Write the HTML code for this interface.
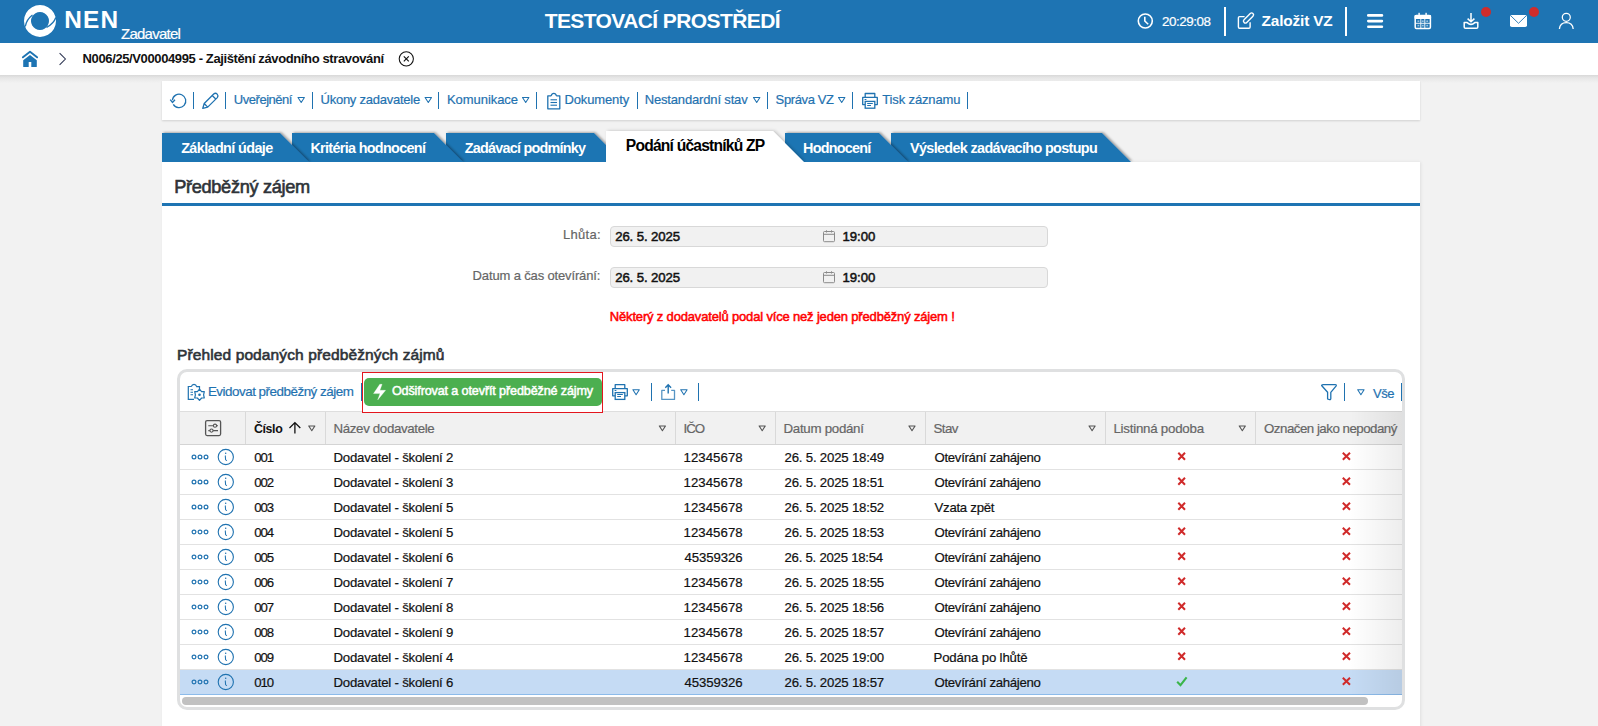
<!DOCTYPE html>
<html lang="cs"><head><meta charset="utf-8"><title>NEN - Předběžný zájem</title>
<style>
html,body{margin:0;padding:0}
body{width:1598px;height:726px;overflow:hidden;position:relative;background:#f2f2f2;font-family:"Liberation Sans",sans-serif}
.a{position:absolute;box-sizing:border-box}
.t{position:absolute;white-space:pre;transform-origin:0 0}
</style></head><body>
<!-- header -->
<div class="a" style="left:0;top:0;width:1598px;height:43px;background:#1e74b3"></div>
<div class="a" style="left:1223.5px;top:7px;width:2px;height:29px;background:#fff"></div>
<div class="a" style="left:1345px;top:7px;width:2px;height:29px;background:#fff"></div>
<!-- breadcrumb -->
<div class="a" style="left:0;top:75px;width:1598px;height:8px;background:linear-gradient(#d8d8d8,#e6e6e6 35%,#f2f2f2)"></div>
<div class="a" style="left:0;top:43px;width:1598px;height:32px;background:#fff"></div>
<!-- toolbar card -->
<div class="a" style="left:162px;top:81px;width:1258px;height:39px;background:#fff;box-shadow:0 1px 2px rgba(0,0,0,.14)"></div>
<!-- main card -->
<div class="a" style="left:162px;top:162px;width:1258px;height:600px;background:#fff;box-shadow:1px 0 3px rgba(0,0,0,.08)"></div>
<!-- tabs -->
<svg class="a" style="left:0;top:0" width="1598" height="162" viewBox="0 0 1598 162">
<defs>
<filter id="ts" x="-10%" y="-30%" width="120%" height="160%"><feDropShadow dx="1.5" dy="-0.7" stdDeviation="1.1" flood-color="#000" flood-opacity="0.35"/></filter>
<filter id="ta" x="-10%" y="-30%" width="120%" height="160%"><feDropShadow dx="1.6" dy="-0.3" stdDeviation="1.4" flood-color="#000" flood-opacity="0.2"/></filter>
</defs>
<polygon filter="url(#ts)" points="891,133 1102,133 1131,162 891,162" fill="#1e74b3"/>
<polygon filter="url(#ts)" points="785,133 879,133 908,162 785,162" fill="#1e74b3"/>
<polygon filter="url(#ts)" points="446,133 594,133 623,162 446,162" fill="#1e74b3"/>
<polygon filter="url(#ts)" points="292,133 434,133 463,162 292,162" fill="#1e74b3"/>
<polygon filter="url(#ts)" points="162,133 280,133 309,162 162,162" fill="#1e74b3"/>
<polygon filter="url(#ta)" points="606,131 773,131 804,162 606,162" fill="#fff"/>
</svg>
<!-- heading underline -->
<div class="a" style="left:162px;top:203px;width:1258px;height:3px;background:#1e74b3"></div>
<!-- inputs -->
<div class="a" style="left:610px;top:226px;width:438px;height:20.5px;background:#f1f1f1;border:1px solid #d8d8d8;border-radius:4px"></div>
<div class="a" style="left:610px;top:267px;width:438px;height:20.5px;background:#f1f1f1;border:1px solid #d8d8d8;border-radius:4px"></div>
<!-- grid container -->
<div class="a" style="left:177px;top:369px;width:1228px;height:341px;border:3px solid #dfe0e1;border-radius:10px;background:#fff"></div>
<!-- table header -->
<div class="a" style="left:180px;top:411px;width:1222px;height:34px;background:#f1f1f1;border-top:1px solid #dedede;border-bottom:1px solid #d4d4d4"></div>
<div class="a" style="left:245px;top:412px;width:1px;height:32px;background:#d9d9d9"></div>
<div class="a" style="left:325px;top:412px;width:1px;height:32px;background:#d9d9d9"></div>
<div class="a" style="left:675px;top:412px;width:1px;height:32px;background:#d9d9d9"></div>
<div class="a" style="left:775px;top:412px;width:1px;height:32px;background:#d9d9d9"></div>
<div class="a" style="left:925px;top:412px;width:1px;height:32px;background:#d9d9d9"></div>
<div class="a" style="left:1105px;top:412px;width:1px;height:32px;background:#d9d9d9"></div>
<div class="a" style="left:1255px;top:412px;width:1px;height:32px;background:#d9d9d9"></div>
<!-- rows -->
<div class="a" style="left:180px;top:445px;width:1222px;height:25px;border-bottom:1px solid #e2e2e2"></div>
<div class="a" style="left:180px;top:470px;width:1222px;height:25px;border-bottom:1px solid #e2e2e2"></div>
<div class="a" style="left:180px;top:495px;width:1222px;height:25px;border-bottom:1px solid #e2e2e2"></div>
<div class="a" style="left:180px;top:520px;width:1222px;height:25px;border-bottom:1px solid #e2e2e2"></div>
<div class="a" style="left:180px;top:545px;width:1222px;height:25px;border-bottom:1px solid #e2e2e2"></div>
<div class="a" style="left:180px;top:570px;width:1222px;height:25px;border-bottom:1px solid #e2e2e2"></div>
<div class="a" style="left:180px;top:595px;width:1222px;height:25px;border-bottom:1px solid #e2e2e2"></div>
<div class="a" style="left:180px;top:620px;width:1222px;height:25px;border-bottom:1px solid #e2e2e2"></div>
<div class="a" style="left:180px;top:645px;width:1222px;height:25px;border-bottom:1px solid #e2e2e2"></div>
<div class="a" style="left:180px;top:670px;width:1222px;height:25px;background:#c5dbf4;border-bottom:1px solid #8cbbea"></div>
<!-- right scroll shade -->
<div class="a" style="left:1350px;top:411px;width:52px;height:284px;background:linear-gradient(to right,rgba(0,0,0,0),rgba(0,0,0,.07))"></div>
<!-- scrollbar -->
<div class="a" style="left:181.5px;top:697px;width:1186px;height:8px;border-radius:4px;background:#c1c1c1"></div>
<!-- red box + green button -->
<div class="a" style="left:362px;top:372px;width:241px;height:41px;border:1px solid #e3161e;background:#fff"></div>
<div class="a" style="left:364px;top:378px;width:238px;height:28px;border-radius:5px;background:#4caf50"></div>
<!-- grid toolbar separators -->
<div class="a" style="left:361px;top:383px;width:1px;height:18px;background:#1f72b0"></div>
<div class="a" style="left:651px;top:383px;width:1px;height:18px;background:#1f72b0"></div>
<div class="a" style="left:698px;top:383px;width:1px;height:18px;background:#1f72b0"></div>
<div class="a" style="left:1344px;top:383px;width:1px;height:18px;background:#1f72b0"></div>
<div class="a" style="left:1401px;top:383px;width:1px;height:18px;background:#1f72b0"></div>
<!-- toolbar separators -->
<div class="a" style="left:193px;top:92px;width:1px;height:17px;background:#1f72b0"></div>
<div class="a" style="left:225px;top:92px;width:1px;height:17px;background:#1f72b0"></div>
<div class="a" style="left:312px;top:92px;width:1px;height:17px;background:#1f72b0"></div>
<div class="a" style="left:438px;top:92px;width:1px;height:17px;background:#1f72b0"></div>
<div class="a" style="left:536px;top:92px;width:1px;height:17px;background:#1f72b0"></div>
<div class="a" style="left:637px;top:92px;width:1px;height:17px;background:#1f72b0"></div>
<div class="a" style="left:767px;top:92px;width:1px;height:17px;background:#1f72b0"></div>
<div class="a" style="left:852px;top:92px;width:1px;height:17px;background:#1f72b0"></div>
<div class="a" style="left:967px;top:92px;width:1px;height:17px;background:#1f72b0"></div>

<span class="t" style="left:64.15px;top:8.06px;font-size:24.4px;line-height:24.4px;font-weight:700;color:#fff;letter-spacing:1.250px;">NEN</span>
<span class="t" style="left:121.00px;top:26.25px;font-size:15px;line-height:15px;font-weight:400;color:#fff;letter-spacing:-0.750px;-webkit-text-stroke:0.2px #fff;">Zadavatel</span>
<span class="t" style="left:544.70px;top:10.45px;font-size:21px;line-height:21px;font-weight:700;color:#fff;letter-spacing:-0.594px;">TESTOVACÍ PROSTŘEDÍ</span>
<span class="t" style="left:1161.90px;top:14.61px;font-size:13.4px;line-height:13.4px;font-weight:400;color:#fff;letter-spacing:-0.429px;-webkit-text-stroke:0.2px #fff;">20:29:08</span>
<span class="t" style="left:1261.60px;top:12.81px;font-size:15.4px;line-height:15.4px;font-weight:700;color:#fff;letter-spacing:-0.178px;">Založit VZ</span>
<span class="t" style="left:82.60px;top:51.85px;font-size:13px;line-height:13px;font-weight:700;color:#111;letter-spacing:-0.380px;">N006/25/V00004995 - Zajištění závodního stravování</span>
<span class="t" style="left:233.80px;top:92.85px;font-size:13px;line-height:13px;font-weight:400;color:#1f72b0;letter-spacing:-0.467px;-webkit-text-stroke:0.2px #1f72b0;">Uveřejnění</span>
<span class="t" style="left:320.50px;top:92.85px;font-size:13px;line-height:13px;font-weight:400;color:#1f72b0;letter-spacing:-0.247px;-webkit-text-stroke:0.2px #1f72b0;">Úkony zadavatele</span>
<span class="t" style="left:447.00px;top:92.85px;font-size:13px;line-height:13px;font-weight:400;color:#1f72b0;letter-spacing:-0.056px;-webkit-text-stroke:0.2px #1f72b0;">Komunikace</span>
<span class="t" style="left:564.40px;top:92.85px;font-size:13px;line-height:13px;font-weight:400;color:#1f72b0;letter-spacing:-0.125px;-webkit-text-stroke:0.2px #1f72b0;">Dokumenty</span>
<span class="t" style="left:644.70px;top:92.85px;font-size:13px;line-height:13px;font-weight:400;color:#1f72b0;letter-spacing:-0.156px;-webkit-text-stroke:0.2px #1f72b0;">Nestandardní stav</span>
<span class="t" style="left:775.60px;top:92.85px;font-size:13px;line-height:13px;font-weight:400;color:#1f72b0;letter-spacing:-0.375px;-webkit-text-stroke:0.2px #1f72b0;">Správa VZ</span>
<span class="t" style="left:882.20px;top:92.85px;font-size:13px;line-height:13px;font-weight:400;color:#1f72b0;letter-spacing:-0.127px;-webkit-text-stroke:0.2px #1f72b0;">Tisk záznamu</span>
<span class="t" style="left:181.20px;top:140.66px;font-size:14.4px;line-height:14.4px;font-weight:700;color:#fff;letter-spacing:-0.615px;">Základní údaje</span>
<span class="t" style="left:310.40px;top:140.66px;font-size:14.4px;line-height:14.4px;font-weight:700;color:#fff;letter-spacing:-0.682px;">Kritéria hodnocení</span>
<span class="t" style="left:464.80px;top:140.66px;font-size:14.4px;line-height:14.4px;font-weight:700;color:#fff;letter-spacing:-0.769px;">Zadávací podmínky</span>
<span class="t" style="left:625.80px;top:137.64px;font-size:15.6px;line-height:15.6px;font-weight:700;color:#000;letter-spacing:-0.778px;">Podání účastníků ZP</span>
<span class="t" style="left:803.00px;top:140.66px;font-size:14.4px;line-height:14.4px;font-weight:700;color:#fff;letter-spacing:-0.750px;">Hodnocení</span>
<span class="t" style="left:910.00px;top:140.66px;font-size:14.4px;line-height:14.4px;font-weight:700;color:#fff;letter-spacing:-0.654px;">Výsledek zadávacího postupu</span>
<span class="t" style="left:174.20px;top:178.03px;font-size:18.2px;line-height:18.2px;font-weight:400;color:#2e3338;letter-spacing:-0.321px;-webkit-text-stroke:0.6px #2e3338;">Předběžný zájem</span>
<span class="t" style="left:563.10px;top:227.95px;font-size:13px;line-height:13px;font-weight:400;color:#666;letter-spacing:0.280px;-webkit-text-stroke:0.2px #666;">Lhůta:</span>
<span class="t" style="left:472.60px;top:268.95px;font-size:13px;line-height:13px;font-weight:400;color:#666;letter-spacing:-0.143px;-webkit-text-stroke:0.2px #666;">Datum a čas otevírání:</span>
<span class="t" style="left:615.20px;top:229.68px;font-size:13.2px;line-height:13.2px;font-weight:400;color:#111;letter-spacing:-0.120px;-webkit-text-stroke:0.5px #111;">26. 5. 2025</span>
<span class="t" style="left:842.60px;top:229.68px;font-size:13.2px;line-height:13.2px;font-weight:400;color:#111;letter-spacing:-0.075px;-webkit-text-stroke:0.5px #111;">19:00</span>
<span class="t" style="left:615.20px;top:270.68px;font-size:13.2px;line-height:13.2px;font-weight:400;color:#111;letter-spacing:-0.120px;-webkit-text-stroke:0.5px #111;">26. 5. 2025</span>
<span class="t" style="left:842.60px;top:270.68px;font-size:13.2px;line-height:13.2px;font-weight:400;color:#111;letter-spacing:-0.075px;-webkit-text-stroke:0.5px #111;">19:00</span>
<span class="t" style="left:609.80px;top:309.85px;font-size:13px;line-height:13px;font-weight:400;color:#ff0000;letter-spacing:-0.169px;-webkit-text-stroke:0.5px #ff0000;">Některý z dodavatelů podal více než jeden předběžný zájem !</span>
<span class="t" style="left:177.00px;top:346.62px;font-size:15.5px;line-height:15.5px;font-weight:400;color:#2e3338;letter-spacing:0.115px;-webkit-text-stroke:0.6px #2e3338;">Přehled podaných předběžných zájmů</span>
<span class="t" style="left:207.90px;top:384.61px;font-size:13.4px;line-height:13.4px;font-weight:400;color:#1f72b0;letter-spacing:-0.483px;-webkit-text-stroke:0.2px #1f72b0;">Evidovat předběžný zájem</span>
<span class="t" style="left:391.90px;top:385.49px;font-size:12.6px;line-height:12.6px;font-weight:400;color:#fff;letter-spacing:-0.129px;-webkit-text-stroke:0.5px #fff;">Odšifrovat a otevřít předběžné zájmy</span>
<span class="t" style="left:1373.10px;top:386.75px;font-size:13px;line-height:13px;font-weight:400;color:#1f72b0;letter-spacing:-0.450px;-webkit-text-stroke:0.2px #1f72b0;">Vše</span>
<span class="t" style="left:253.90px;top:423.16px;font-size:12.4px;line-height:12.4px;font-weight:700;color:#111;letter-spacing:-0.350px;">Číslo</span>
<span class="t" style="left:333.50px;top:421.69px;font-size:13.3px;line-height:13.3px;font-weight:400;color:#666;letter-spacing:-0.347px;-webkit-text-stroke:0.2px #666;">Název dodavatele</span>
<span class="t" style="left:683.50px;top:421.69px;font-size:13.3px;line-height:13.3px;font-weight:400;color:#666;letter-spacing:-1.050px;-webkit-text-stroke:0.2px #666;">IČO</span>
<span class="t" style="left:783.50px;top:421.69px;font-size:13.3px;line-height:13.3px;font-weight:400;color:#666;letter-spacing:-0.282px;-webkit-text-stroke:0.2px #666;">Datum podání</span>
<span class="t" style="left:933.50px;top:421.69px;font-size:13.3px;line-height:13.3px;font-weight:400;color:#666;letter-spacing:-0.567px;-webkit-text-stroke:0.2px #666;">Stav</span>
<span class="t" style="left:1113.40px;top:421.69px;font-size:13.3px;line-height:13.3px;font-weight:400;color:#666;letter-spacing:-0.229px;-webkit-text-stroke:0.2px #666;">Listinná podoba</span>
<span class="t" style="left:1264.00px;top:421.69px;font-size:13.3px;line-height:13.3px;font-weight:400;color:#666;letter-spacing:-0.500px;-webkit-text-stroke:0.2px #666;">Označen jako nepodaný</span>
<span class="t" style="left:254.20px;top:450.78px;font-size:13.2px;line-height:13.2px;font-weight:400;color:#111;letter-spacing:-1.000px;-webkit-text-stroke:0.2px #111;">001</span>
<span class="t" style="left:333.50px;top:450.78px;font-size:13.2px;line-height:13.2px;font-weight:400;color:#111;letter-spacing:-0.205px;-webkit-text-stroke:0.2px #111;">Dodavatel - školení 2</span>
<span class="t" style="left:683.50px;top:450.78px;font-size:13.2px;line-height:13.2px;font-weight:400;color:#111;letter-spacing:0.071px;-webkit-text-stroke:0.2px #111;">12345678</span>
<span class="t" style="left:784.50px;top:450.78px;font-size:13.2px;line-height:13.2px;font-weight:400;color:#111;letter-spacing:-0.188px;-webkit-text-stroke:0.2px #111;">26. 5. 2025 18:49</span>
<span class="t" style="left:934.50px;top:450.78px;font-size:13.2px;line-height:13.2px;font-weight:400;color:#111;letter-spacing:-0.300px;-webkit-text-stroke:0.2px #111;">Otevírání zahájeno</span>
<span class="t" style="left:254.20px;top:475.78px;font-size:13.2px;line-height:13.2px;font-weight:400;color:#111;letter-spacing:-1.000px;-webkit-text-stroke:0.2px #111;">002</span>
<span class="t" style="left:333.50px;top:475.78px;font-size:13.2px;line-height:13.2px;font-weight:400;color:#111;letter-spacing:-0.205px;-webkit-text-stroke:0.2px #111;">Dodavatel - školení 3</span>
<span class="t" style="left:683.50px;top:475.78px;font-size:13.2px;line-height:13.2px;font-weight:400;color:#111;letter-spacing:0.071px;-webkit-text-stroke:0.2px #111;">12345678</span>
<span class="t" style="left:784.50px;top:475.78px;font-size:13.2px;line-height:13.2px;font-weight:400;color:#111;letter-spacing:-0.188px;-webkit-text-stroke:0.2px #111;">26. 5. 2025 18:51</span>
<span class="t" style="left:934.50px;top:475.78px;font-size:13.2px;line-height:13.2px;font-weight:400;color:#111;letter-spacing:-0.300px;-webkit-text-stroke:0.2px #111;">Otevírání zahájeno</span>
<span class="t" style="left:254.20px;top:500.78px;font-size:13.2px;line-height:13.2px;font-weight:400;color:#111;letter-spacing:-1.000px;-webkit-text-stroke:0.2px #111;">003</span>
<span class="t" style="left:333.50px;top:500.78px;font-size:13.2px;line-height:13.2px;font-weight:400;color:#111;letter-spacing:-0.205px;-webkit-text-stroke:0.2px #111;">Dodavatel - školení 5</span>
<span class="t" style="left:683.50px;top:500.78px;font-size:13.2px;line-height:13.2px;font-weight:400;color:#111;letter-spacing:0.071px;-webkit-text-stroke:0.2px #111;">12345678</span>
<span class="t" style="left:784.50px;top:500.78px;font-size:13.2px;line-height:13.2px;font-weight:400;color:#111;letter-spacing:-0.188px;-webkit-text-stroke:0.2px #111;">26. 5. 2025 18:52</span>
<span class="t" style="left:934.50px;top:500.78px;font-size:13.2px;line-height:13.2px;font-weight:400;color:#111;letter-spacing:-0.256px;-webkit-text-stroke:0.2px #111;">Vzata zpět</span>
<span class="t" style="left:254.20px;top:525.78px;font-size:13.2px;line-height:13.2px;font-weight:400;color:#111;letter-spacing:-1.000px;-webkit-text-stroke:0.2px #111;">004</span>
<span class="t" style="left:333.50px;top:525.78px;font-size:13.2px;line-height:13.2px;font-weight:400;color:#111;letter-spacing:-0.205px;-webkit-text-stroke:0.2px #111;">Dodavatel - školení 5</span>
<span class="t" style="left:683.50px;top:525.78px;font-size:13.2px;line-height:13.2px;font-weight:400;color:#111;letter-spacing:0.071px;-webkit-text-stroke:0.2px #111;">12345678</span>
<span class="t" style="left:784.50px;top:525.78px;font-size:13.2px;line-height:13.2px;font-weight:400;color:#111;letter-spacing:-0.188px;-webkit-text-stroke:0.2px #111;">26. 5. 2025 18:53</span>
<span class="t" style="left:934.50px;top:525.78px;font-size:13.2px;line-height:13.2px;font-weight:400;color:#111;letter-spacing:-0.300px;-webkit-text-stroke:0.2px #111;">Otevírání zahájeno</span>
<span class="t" style="left:254.20px;top:550.78px;font-size:13.2px;line-height:13.2px;font-weight:400;color:#111;letter-spacing:-1.000px;-webkit-text-stroke:0.2px #111;">005</span>
<span class="t" style="left:333.50px;top:550.78px;font-size:13.2px;line-height:13.2px;font-weight:400;color:#111;letter-spacing:-0.205px;-webkit-text-stroke:0.2px #111;">Dodavatel - školení 6</span>
<span class="t" style="left:684.50px;top:550.78px;font-size:13.2px;line-height:13.2px;font-weight:400;color:#111;letter-spacing:-0.071px;-webkit-text-stroke:0.2px #111;">45359326</span>
<span class="t" style="left:784.50px;top:550.78px;font-size:13.2px;line-height:13.2px;font-weight:400;color:#111;letter-spacing:-0.250px;-webkit-text-stroke:0.2px #111;">26. 5. 2025 18:54</span>
<span class="t" style="left:934.50px;top:550.78px;font-size:13.2px;line-height:13.2px;font-weight:400;color:#111;letter-spacing:-0.300px;-webkit-text-stroke:0.2px #111;">Otevírání zahájeno</span>
<span class="t" style="left:254.20px;top:575.78px;font-size:13.2px;line-height:13.2px;font-weight:400;color:#111;letter-spacing:-1.000px;-webkit-text-stroke:0.2px #111;">006</span>
<span class="t" style="left:333.50px;top:575.78px;font-size:13.2px;line-height:13.2px;font-weight:400;color:#111;letter-spacing:-0.205px;-webkit-text-stroke:0.2px #111;">Dodavatel - školení 7</span>
<span class="t" style="left:683.50px;top:575.78px;font-size:13.2px;line-height:13.2px;font-weight:400;color:#111;letter-spacing:0.071px;-webkit-text-stroke:0.2px #111;">12345678</span>
<span class="t" style="left:784.50px;top:575.78px;font-size:13.2px;line-height:13.2px;font-weight:400;color:#111;letter-spacing:-0.188px;-webkit-text-stroke:0.2px #111;">26. 5. 2025 18:55</span>
<span class="t" style="left:934.50px;top:575.78px;font-size:13.2px;line-height:13.2px;font-weight:400;color:#111;letter-spacing:-0.300px;-webkit-text-stroke:0.2px #111;">Otevírání zahájeno</span>
<span class="t" style="left:254.20px;top:600.78px;font-size:13.2px;line-height:13.2px;font-weight:400;color:#111;letter-spacing:-1.000px;-webkit-text-stroke:0.2px #111;">007</span>
<span class="t" style="left:333.50px;top:600.78px;font-size:13.2px;line-height:13.2px;font-weight:400;color:#111;letter-spacing:-0.205px;-webkit-text-stroke:0.2px #111;">Dodavatel - školení 8</span>
<span class="t" style="left:683.50px;top:600.78px;font-size:13.2px;line-height:13.2px;font-weight:400;color:#111;letter-spacing:0.071px;-webkit-text-stroke:0.2px #111;">12345678</span>
<span class="t" style="left:784.50px;top:600.78px;font-size:13.2px;line-height:13.2px;font-weight:400;color:#111;letter-spacing:-0.188px;-webkit-text-stroke:0.2px #111;">26. 5. 2025 18:56</span>
<span class="t" style="left:934.50px;top:600.78px;font-size:13.2px;line-height:13.2px;font-weight:400;color:#111;letter-spacing:-0.300px;-webkit-text-stroke:0.2px #111;">Otevírání zahájeno</span>
<span class="t" style="left:254.20px;top:625.78px;font-size:13.2px;line-height:13.2px;font-weight:400;color:#111;letter-spacing:-1.000px;-webkit-text-stroke:0.2px #111;">008</span>
<span class="t" style="left:333.50px;top:625.78px;font-size:13.2px;line-height:13.2px;font-weight:400;color:#111;letter-spacing:-0.205px;-webkit-text-stroke:0.2px #111;">Dodavatel - školení 9</span>
<span class="t" style="left:683.50px;top:625.78px;font-size:13.2px;line-height:13.2px;font-weight:400;color:#111;letter-spacing:0.071px;-webkit-text-stroke:0.2px #111;">12345678</span>
<span class="t" style="left:784.50px;top:625.78px;font-size:13.2px;line-height:13.2px;font-weight:400;color:#111;letter-spacing:-0.188px;-webkit-text-stroke:0.2px #111;">26. 5. 2025 18:57</span>
<span class="t" style="left:934.50px;top:625.78px;font-size:13.2px;line-height:13.2px;font-weight:400;color:#111;letter-spacing:-0.300px;-webkit-text-stroke:0.2px #111;">Otevírání zahájeno</span>
<span class="t" style="left:254.20px;top:650.78px;font-size:13.2px;line-height:13.2px;font-weight:400;color:#111;letter-spacing:-1.000px;-webkit-text-stroke:0.2px #111;">009</span>
<span class="t" style="left:333.50px;top:650.78px;font-size:13.2px;line-height:13.2px;font-weight:400;color:#111;letter-spacing:-0.205px;-webkit-text-stroke:0.2px #111;">Dodavatel - školení 4</span>
<span class="t" style="left:683.50px;top:650.78px;font-size:13.2px;line-height:13.2px;font-weight:400;color:#111;letter-spacing:0.071px;-webkit-text-stroke:0.2px #111;">12345678</span>
<span class="t" style="left:784.50px;top:650.78px;font-size:13.2px;line-height:13.2px;font-weight:400;color:#111;letter-spacing:-0.188px;-webkit-text-stroke:0.2px #111;">26. 5. 2025 19:00</span>
<span class="t" style="left:933.50px;top:650.78px;font-size:13.2px;line-height:13.2px;font-weight:400;color:#111;letter-spacing:-0.136px;-webkit-text-stroke:0.2px #111;">Podána po lhůtě</span>
<span class="t" style="left:254.20px;top:675.78px;font-size:13.2px;line-height:13.2px;font-weight:400;color:#111;letter-spacing:-1.000px;-webkit-text-stroke:0.2px #111;">010</span>
<span class="t" style="left:333.50px;top:675.78px;font-size:13.2px;line-height:13.2px;font-weight:400;color:#111;letter-spacing:-0.205px;-webkit-text-stroke:0.2px #111;">Dodavatel - školení 6</span>
<span class="t" style="left:684.50px;top:675.78px;font-size:13.2px;line-height:13.2px;font-weight:400;color:#111;letter-spacing:-0.071px;-webkit-text-stroke:0.2px #111;">45359326</span>
<span class="t" style="left:784.50px;top:675.78px;font-size:13.2px;line-height:13.2px;font-weight:400;color:#111;letter-spacing:-0.188px;-webkit-text-stroke:0.2px #111;">26. 5. 2025 18:57</span>
<span class="t" style="left:934.50px;top:675.78px;font-size:13.2px;line-height:13.2px;font-weight:400;color:#111;letter-spacing:-0.300px;-webkit-text-stroke:0.2px #111;">Otevírání zahájeno</span>
<svg class="a" style="left:0;top:0" width="1598" height="726" viewBox="0 0 1598 726">
<path d="M40,5 a16,16 0 1,0 0.01,0 z M40,12 a9,9 0 1,1 -0.01,0 z" fill="#fff" fill-rule="evenodd"/>
<path d="M32.5,15 C28.5,18 26,22 25.3,26.5" stroke="#1e74b3" stroke-width="1.3" fill="none"/>
<path d="M46.5,27.5 C51,25 54.5,21.5 55.8,17.5" stroke="#1e74b3" stroke-width="1.3" fill="none"/>
<path d="M22.9,57.3 L30,51.7 L37.1,57.3" stroke="#1e74b3" stroke-width="1.9" fill="none" stroke-linecap="round" stroke-linejoin="round"/>
<path d="M23.2,60.3 L30,55 L36.8,60.3 V66.4 Q36.8,67 36.2,67 H31.3 V62 H28.7 V67 H23.8 Q23.2,67 23.2,66.4 Z" fill="#1e74b3"/>
<path d="M59.6,53.2 L65.4,59 L59.6,64.8" stroke="#2a3350" stroke-width="1.05" fill="none"/>
<circle cx="406.3" cy="58.8" r="7.1" stroke="#111" stroke-width="1.05" fill="none"/>
<path d="M403.8,56.3 L408.8,61.3 M408.8,56.3 L403.8,61.3" stroke="#111" stroke-width="1.15"/>
<circle cx="1145.3" cy="21" r="7" stroke="#fff" stroke-width="1.6" fill="none"/>
<path d="M1144.8,16.8 V21 L1148.2,24.3" stroke="#fff" stroke-width="1.6" fill="none"/>
<path d="M1244.6,16.6 H1239.6 Q1238.4,16.6 1238.4,17.8 V27.1 Q1238.4,28.3 1239.6,28.3 H1248.9 Q1250.1,28.3 1250.1,27.1 V22.3" stroke="#fff" stroke-width="1.4" fill="none"/>
<rect x="1242.2" y="16.1" width="12.6" height="3.8" rx="1.9" transform="rotate(-45 1248.5 18)" stroke="#fff" stroke-width="1.4" fill="none"/>
<rect x="1367" y="14" width="16.2" height="2.7" rx="1.3" fill="#fff"/>
<rect x="1367" y="19.7" width="16.2" height="2.7" rx="1.3" fill="#fff"/>
<rect x="1367" y="25.4" width="16.2" height="2.7" rx="1.3" fill="#fff"/>
<rect x="1415.2" y="15.6" width="15.2" height="12.8" rx="1.2" stroke="#fff" stroke-width="1.5" fill="none"/>
<rect x="1414.5" y="15" width="16.6" height="4" rx="1" fill="#fff"/>
<rect x="1418.4" y="12.8" width="1.4" height="3.4" fill="#fff"/><rect x="1425.4" y="12.8" width="1.4" height="3.4" fill="#fff"/>
<path d="M1420.8,19 V28 M1424.8,19 V28 M1415.5,23.3 H1430" stroke="#fff" stroke-width="1" opacity="0.9"/>
<rect x="1417.5" y="20.4" width="1.8" height="1.6" fill="#fff" opacity="0.55"/>
<rect x="1417.5" y="24.8" width="1.8" height="1.6" fill="#fff" opacity="0.55"/>
<rect x="1421.9" y="20.4" width="1.8" height="1.6" fill="#fff" opacity="0.55"/>
<rect x="1421.9" y="24.8" width="1.8" height="1.6" fill="#fff" opacity="0.55"/>
<rect x="1426.3" y="20.4" width="1.8" height="1.6" fill="#fff" opacity="0.55"/>
<rect x="1426.3" y="24.8" width="1.8" height="1.6" fill="#fff" opacity="0.55"/>
<path d="M1471,13 V21.8 M1467.6,18.6 L1471,21.8 L1474.4,18.6" stroke="#fff" stroke-width="1.5" fill="none"/>
<path d="M1464.2,22.6 H1467.2 Q1471,26.2 1474.8,22.6 H1477.8 V27 Q1477.8,28.3 1476.5,28.3 H1465.5 Q1464.2,28.3 1464.2,27 Z" stroke="#fff" stroke-width="1.5" fill="none" stroke-linejoin="round"/>
<circle cx="1486" cy="12" r="5" fill="#cf2c2c"/>
<rect x="1510" y="15" width="17" height="12" rx="1.8" fill="#fff"/>
<path d="M1510.6,15.6 L1518.5,23.3 L1526.4,15.6" stroke="#1e74b3" stroke-width="0.9" fill="none"/>
<circle cx="1534" cy="12" r="5" fill="#cf2c2c"/>
<circle cx="1566.3" cy="17.3" r="4" stroke="#fff" stroke-width="1.25" fill="none"/>
<path d="M1559.4,29 Q1560,22.6 1566.3,22.6 Q1572.6,22.6 1573.2,29" stroke="#fff" stroke-width="1.3" fill="none"/>
<path d="M173.3,104.3 A6.7,6.7 0 1,0 172.4,100.3" stroke="#1f72b0" stroke-width="1.3" fill="none"/>
<path d="M170.2,99.6 L172.5,102.4 L175,99.8" stroke="#1f72b0" stroke-width="1.3" fill="none"/>
<path d="M202.8,108.3 L204.2,103.5 L213.7,94 Q215.5,92.4 217.2,94.1 Q218.7,95.8 217.3,97.6 L207.7,107.1 Z M212.2,95.5 L216,99.2 M204.2,103.5 L207.7,107.1" stroke="#1f72b0" stroke-width="1.3" fill="none" stroke-linejoin="round"/>
<path d="M298.0,97.5 H304.4 L301.2,102.5 Z" stroke="#1f72b0" stroke-width="1.05" fill="none" stroke-linejoin="round"/>
<path d="M425.1,97.5 H431.5 L428.3,102.5 Z" stroke="#1f72b0" stroke-width="1.05" fill="none" stroke-linejoin="round"/>
<path d="M522.5,97.5 H528.9 L525.7,102.5 Z" stroke="#1f72b0" stroke-width="1.05" fill="none" stroke-linejoin="round"/>
<path d="M753.5,97.5 H759.9 L756.7,102.5 Z" stroke="#1f72b0" stroke-width="1.05" fill="none" stroke-linejoin="round"/>
<path d="M838.5,97.5 H844.9 L841.7,102.5 Z" stroke="#1f72b0" stroke-width="1.05" fill="none" stroke-linejoin="round"/>
<path d="M551.3,95.8 H547.8 V108.8 H559.8 V95.8 H556.3" stroke="#1f72b0" stroke-width="1.3" fill="none" stroke-linejoin="round"/>
<path d="M551.0999999999999,95.89999999999999 Q551.8,93.3 553.8,93.3 Q555.8,93.3 556.5,95.89999999999999" stroke="#1f72b0" stroke-width="1.3" fill="none"/>
<path d="M550.5,99.8 H557" stroke="#1f72b0" stroke-width="1.1"/>
<path d="M550.5,102.5 H557" stroke="#1f72b0" stroke-width="1.1"/>
<path d="M550.5,105.2 H557" stroke="#1f72b0" stroke-width="1.1"/>
<path d="M865.2,97.1 V93.5 H874.8 V97.1" stroke="#1f72b0" stroke-width="1.3" fill="none" stroke-linejoin="round"/>
<path d="M865.2,104.6 H862.7 V97.39999999999999 H877.3 V104.6 H874.8" stroke="#1f72b0" stroke-width="1.3" fill="none" stroke-linejoin="round"/>
<rect x="865.2" y="101.39999999999999" width="9.6" height="6.8" stroke="#1f72b0" stroke-width="1.3" fill="none"/>
<path d="M867.2,103.5 H872.8 M867.2,105.5 H871" stroke="#1f72b0" stroke-width="1"/>
<path d="M864.6,99.5 H866.4" stroke="#1f72b0" stroke-width="1"/>
<rect x="823.5" y="231.5" width="11" height="10.2" rx="1" stroke="#8a8a8a" stroke-width="1" fill="none"/>
<path d="M823.5,234.3 H834.5 M826.5,230.3 V232.5 M831.5,230.3 V232.5" stroke="#8a8a8a" stroke-width="1"/>
<rect x="823.5" y="272.5" width="11" height="10.2" rx="1" stroke="#8a8a8a" stroke-width="1" fill="none"/>
<path d="M823.5,275.3 H834.5 M826.5,271.3 V273.5 M831.5,271.3 V273.5" stroke="#8a8a8a" stroke-width="1"/>
<path d="M191.5,386.5 H188.3 V399.3 H194" stroke="#1f72b0" stroke-width="1.2" fill="none"/>
<path d="M191.3,386.6 Q192,384.3 194,384.3 Q196,384.3 196.7,386.6 H199.5 V389.5" stroke="#1f72b0" stroke-width="1.2" fill="none"/>
<path d="M190.5,389.8 H193 M190.5,392.3 H193 M190.5,394.8 H193" stroke="#1f72b0" stroke-width="1.1"/>
<path d="M199.5,389.2 L201.6,391.6 L204.3,391.6 L203.6,394.8 L204.3,398 L201.6,398 L199.5,400.4 L197.4,398 L194.7,398 L195.4,394.8 L194.7,391.6 L197.4,391.6 Z" stroke="#1f72b0" stroke-width="1.2" fill="none" stroke-linejoin="round"/>
<circle cx="199.5" cy="394.8" r="1.3" fill="#1f72b0"/>
<path d="M379.8,384.3 H382.1 L379.9,390.3 H385.6 L377.7,399.9 L380,393.6 H373.5 Z" fill="#fff" stroke="#fff" stroke-width="0.3" stroke-linejoin="round"/>
<path d="M615.2,388.3 V384.7 H624.8 V388.3" stroke="#1f72b0" stroke-width="1.3" fill="none" stroke-linejoin="round"/>
<path d="M615.2,395.8 H612.7 V388.6 H627.3 V395.8 H624.8" stroke="#1f72b0" stroke-width="1.3" fill="none" stroke-linejoin="round"/>
<rect x="615.2" y="392.6" width="9.6" height="6.8" stroke="#1f72b0" stroke-width="1.3" fill="none"/>
<path d="M617.2,394.5 H622.8 M617.2,396.5 H621" stroke="#1f72b0" stroke-width="1"/>
<path d="M614.6,390.5 H616.4" stroke="#1f72b0" stroke-width="1"/>
<path d="M632.9,389.7 H639.3 L636.1,394.7 Z" stroke="#1f72b0" stroke-width="1.05" fill="none" stroke-linejoin="round"/>
<path d="M665,390.3 H661.8 V399.4 H674.5 V390.3 H671.2" stroke="#1f72b0" stroke-width="1.3" fill="none" stroke-linejoin="round" opacity="0.75"/>
<path d="M668.2,393.5 V385 M665.3,387.8 L668.2,384.8 L671.1,387.8" stroke="#1f72b0" stroke-width="1.4" fill="none"/>
<path d="M680.7,389.7 H687.1 L683.9000000000001,394.7 Z" stroke="#1f72b0" stroke-width="1.05" fill="none" stroke-linejoin="round"/>
<path d="M1321.6,385.5 Q1321.6,384.6 1323,384.6 H1335.3 Q1336.6,384.6 1336.2,385.8 L1330.8,392.3 V398.6 Q1330.8,399.8 1329.6,399.6 L1327.6,399 V392.3 Z" stroke="#1f72b0" stroke-width="1.3" fill="none" stroke-linejoin="round"/>
<path d="M1357.7,389.8 H1364.1000000000001 L1360.9,394.8 Z" stroke="#1f72b0" stroke-width="1.05" fill="none" stroke-linejoin="round"/>
<rect x="205.6" y="420.6" width="15" height="15" rx="1.5" stroke="#555" stroke-width="1.3" fill="none"/>
<path d="M208.3,425.7 H218 M208.3,430.6 H218" stroke="#555" stroke-width="1.1"/>
<circle cx="215" cy="425.7" r="1.6" fill="#f1f1f1" stroke="#555" stroke-width="1.1"/><circle cx="211.5" cy="430.6" r="1.6" fill="#f1f1f1" stroke="#555" stroke-width="1.1"/>
<path d="M294.9,422.6 V433.6 M289.5,428 L294.9,422.6 L300.3,428" stroke="#111" stroke-width="1.3" fill="none"/>
<path d="M308.7,425.9 H314.9 L311.8,430.7 Z" stroke="#555" stroke-width="1.05" fill="none" stroke-linejoin="round"/>
<path d="M659.3,425.9 H665.5 L662.4,430.7 Z" stroke="#555" stroke-width="1.05" fill="none" stroke-linejoin="round"/>
<path d="M759.1,425.9 H765.3000000000001 L762.2,430.7 Z" stroke="#555" stroke-width="1.05" fill="none" stroke-linejoin="round"/>
<path d="M908.9,425.9 H915.1 L912.0,430.7 Z" stroke="#555" stroke-width="1.05" fill="none" stroke-linejoin="round"/>
<path d="M1089.0,425.9 H1095.2 L1092.1,430.7 Z" stroke="#555" stroke-width="1.05" fill="none" stroke-linejoin="round"/>
<path d="M1239.2,425.9 H1245.4 L1242.3,430.7 Z" stroke="#555" stroke-width="1.05" fill="none" stroke-linejoin="round"/>
<circle cx="194" cy="457" r="1.9" stroke="#1f72b0" stroke-width="1.2" fill="none"/>
<circle cx="200" cy="457" r="1.9" stroke="#1f72b0" stroke-width="1.2" fill="none"/>
<circle cx="206" cy="457" r="1.9" stroke="#1f72b0" stroke-width="1.2" fill="none"/>
<circle cx="225.8" cy="457" r="7.6" stroke="#1f72b0" stroke-width="1.1" fill="none"/>
<circle cx="225.7" cy="453.3" r="0.75" fill="#1f72b0"/>
<path d="M225,455.7 L225.3,456 L225.6,459.6 Q225.9,460.4 227,460.6" stroke="#1f72b0" stroke-width="1.05" fill="none"/>
<path d="M1178.3,452.8 L1185,459.8 M1185,452.8 L1178.3,459.8" stroke="#d02a2a" stroke-width="2"/>
<path d="M1342.8,452.8 L1350,459.8 M1350,452.8 L1342.8,459.8" stroke="#d02a2a" stroke-width="2"/>
<circle cx="194" cy="482" r="1.9" stroke="#1f72b0" stroke-width="1.2" fill="none"/>
<circle cx="200" cy="482" r="1.9" stroke="#1f72b0" stroke-width="1.2" fill="none"/>
<circle cx="206" cy="482" r="1.9" stroke="#1f72b0" stroke-width="1.2" fill="none"/>
<circle cx="225.8" cy="482" r="7.6" stroke="#1f72b0" stroke-width="1.1" fill="none"/>
<circle cx="225.7" cy="478.3" r="0.75" fill="#1f72b0"/>
<path d="M225,480.7 L225.3,481 L225.6,484.6 Q225.9,485.4 227,485.6" stroke="#1f72b0" stroke-width="1.05" fill="none"/>
<path d="M1178.3,477.8 L1185,484.8 M1185,477.8 L1178.3,484.8" stroke="#d02a2a" stroke-width="2"/>
<path d="M1342.8,477.8 L1350,484.8 M1350,477.8 L1342.8,484.8" stroke="#d02a2a" stroke-width="2"/>
<circle cx="194" cy="507" r="1.9" stroke="#1f72b0" stroke-width="1.2" fill="none"/>
<circle cx="200" cy="507" r="1.9" stroke="#1f72b0" stroke-width="1.2" fill="none"/>
<circle cx="206" cy="507" r="1.9" stroke="#1f72b0" stroke-width="1.2" fill="none"/>
<circle cx="225.8" cy="507" r="7.6" stroke="#1f72b0" stroke-width="1.1" fill="none"/>
<circle cx="225.7" cy="503.3" r="0.75" fill="#1f72b0"/>
<path d="M225,505.7 L225.3,506 L225.6,509.6 Q225.9,510.4 227,510.6" stroke="#1f72b0" stroke-width="1.05" fill="none"/>
<path d="M1178.3,502.8 L1185,509.8 M1185,502.8 L1178.3,509.8" stroke="#d02a2a" stroke-width="2"/>
<path d="M1342.8,502.8 L1350,509.8 M1350,502.8 L1342.8,509.8" stroke="#d02a2a" stroke-width="2"/>
<circle cx="194" cy="532" r="1.9" stroke="#1f72b0" stroke-width="1.2" fill="none"/>
<circle cx="200" cy="532" r="1.9" stroke="#1f72b0" stroke-width="1.2" fill="none"/>
<circle cx="206" cy="532" r="1.9" stroke="#1f72b0" stroke-width="1.2" fill="none"/>
<circle cx="225.8" cy="532" r="7.6" stroke="#1f72b0" stroke-width="1.1" fill="none"/>
<circle cx="225.7" cy="528.3" r="0.75" fill="#1f72b0"/>
<path d="M225,530.7 L225.3,531 L225.6,534.6 Q225.9,535.4 227,535.6" stroke="#1f72b0" stroke-width="1.05" fill="none"/>
<path d="M1178.3,527.8 L1185,534.8 M1185,527.8 L1178.3,534.8" stroke="#d02a2a" stroke-width="2"/>
<path d="M1342.8,527.8 L1350,534.8 M1350,527.8 L1342.8,534.8" stroke="#d02a2a" stroke-width="2"/>
<circle cx="194" cy="557" r="1.9" stroke="#1f72b0" stroke-width="1.2" fill="none"/>
<circle cx="200" cy="557" r="1.9" stroke="#1f72b0" stroke-width="1.2" fill="none"/>
<circle cx="206" cy="557" r="1.9" stroke="#1f72b0" stroke-width="1.2" fill="none"/>
<circle cx="225.8" cy="557" r="7.6" stroke="#1f72b0" stroke-width="1.1" fill="none"/>
<circle cx="225.7" cy="553.3" r="0.75" fill="#1f72b0"/>
<path d="M225,555.7 L225.3,556 L225.6,559.6 Q225.9,560.4 227,560.6" stroke="#1f72b0" stroke-width="1.05" fill="none"/>
<path d="M1178.3,552.8 L1185,559.8 M1185,552.8 L1178.3,559.8" stroke="#d02a2a" stroke-width="2"/>
<path d="M1342.8,552.8 L1350,559.8 M1350,552.8 L1342.8,559.8" stroke="#d02a2a" stroke-width="2"/>
<circle cx="194" cy="582" r="1.9" stroke="#1f72b0" stroke-width="1.2" fill="none"/>
<circle cx="200" cy="582" r="1.9" stroke="#1f72b0" stroke-width="1.2" fill="none"/>
<circle cx="206" cy="582" r="1.9" stroke="#1f72b0" stroke-width="1.2" fill="none"/>
<circle cx="225.8" cy="582" r="7.6" stroke="#1f72b0" stroke-width="1.1" fill="none"/>
<circle cx="225.7" cy="578.3" r="0.75" fill="#1f72b0"/>
<path d="M225,580.7 L225.3,581 L225.6,584.6 Q225.9,585.4 227,585.6" stroke="#1f72b0" stroke-width="1.05" fill="none"/>
<path d="M1178.3,577.8 L1185,584.8 M1185,577.8 L1178.3,584.8" stroke="#d02a2a" stroke-width="2"/>
<path d="M1342.8,577.8 L1350,584.8 M1350,577.8 L1342.8,584.8" stroke="#d02a2a" stroke-width="2"/>
<circle cx="194" cy="607" r="1.9" stroke="#1f72b0" stroke-width="1.2" fill="none"/>
<circle cx="200" cy="607" r="1.9" stroke="#1f72b0" stroke-width="1.2" fill="none"/>
<circle cx="206" cy="607" r="1.9" stroke="#1f72b0" stroke-width="1.2" fill="none"/>
<circle cx="225.8" cy="607" r="7.6" stroke="#1f72b0" stroke-width="1.1" fill="none"/>
<circle cx="225.7" cy="603.3" r="0.75" fill="#1f72b0"/>
<path d="M225,605.7 L225.3,606 L225.6,609.6 Q225.9,610.4 227,610.6" stroke="#1f72b0" stroke-width="1.05" fill="none"/>
<path d="M1178.3,602.8 L1185,609.8 M1185,602.8 L1178.3,609.8" stroke="#d02a2a" stroke-width="2"/>
<path d="M1342.8,602.8 L1350,609.8 M1350,602.8 L1342.8,609.8" stroke="#d02a2a" stroke-width="2"/>
<circle cx="194" cy="632" r="1.9" stroke="#1f72b0" stroke-width="1.2" fill="none"/>
<circle cx="200" cy="632" r="1.9" stroke="#1f72b0" stroke-width="1.2" fill="none"/>
<circle cx="206" cy="632" r="1.9" stroke="#1f72b0" stroke-width="1.2" fill="none"/>
<circle cx="225.8" cy="632" r="7.6" stroke="#1f72b0" stroke-width="1.1" fill="none"/>
<circle cx="225.7" cy="628.3" r="0.75" fill="#1f72b0"/>
<path d="M225,630.7 L225.3,631 L225.6,634.6 Q225.9,635.4 227,635.6" stroke="#1f72b0" stroke-width="1.05" fill="none"/>
<path d="M1178.3,627.8 L1185,634.8 M1185,627.8 L1178.3,634.8" stroke="#d02a2a" stroke-width="2"/>
<path d="M1342.8,627.8 L1350,634.8 M1350,627.8 L1342.8,634.8" stroke="#d02a2a" stroke-width="2"/>
<circle cx="194" cy="657" r="1.9" stroke="#1f72b0" stroke-width="1.2" fill="none"/>
<circle cx="200" cy="657" r="1.9" stroke="#1f72b0" stroke-width="1.2" fill="none"/>
<circle cx="206" cy="657" r="1.9" stroke="#1f72b0" stroke-width="1.2" fill="none"/>
<circle cx="225.8" cy="657" r="7.6" stroke="#1f72b0" stroke-width="1.1" fill="none"/>
<circle cx="225.7" cy="653.3" r="0.75" fill="#1f72b0"/>
<path d="M225,655.7 L225.3,656 L225.6,659.6 Q225.9,660.4 227,660.6" stroke="#1f72b0" stroke-width="1.05" fill="none"/>
<path d="M1178.3,652.8 L1185,659.8 M1185,652.8 L1178.3,659.8" stroke="#d02a2a" stroke-width="2"/>
<path d="M1342.8,652.8 L1350,659.8 M1350,652.8 L1342.8,659.8" stroke="#d02a2a" stroke-width="2"/>
<circle cx="194" cy="682" r="1.9" stroke="#1f72b0" stroke-width="1.2" fill="none"/>
<circle cx="200" cy="682" r="1.9" stroke="#1f72b0" stroke-width="1.2" fill="none"/>
<circle cx="206" cy="682" r="1.9" stroke="#1f72b0" stroke-width="1.2" fill="none"/>
<circle cx="225.8" cy="682" r="7.6" stroke="#1f72b0" stroke-width="1.1" fill="none"/>
<circle cx="225.7" cy="678.3" r="0.75" fill="#1f72b0"/>
<path d="M225,680.7 L225.3,681 L225.6,684.6 Q225.9,685.4 227,685.6" stroke="#1f72b0" stroke-width="1.05" fill="none"/>
<path d="M1177.2,681.7 L1180.5,685.2 L1186.6,677.4" stroke="#3ab54a" stroke-width="2.1" fill="none"/>
<path d="M1342.8,677.8 L1350,684.8 M1350,677.8 L1342.8,684.8" stroke="#d02a2a" stroke-width="2"/>
</svg>
</body></html>
